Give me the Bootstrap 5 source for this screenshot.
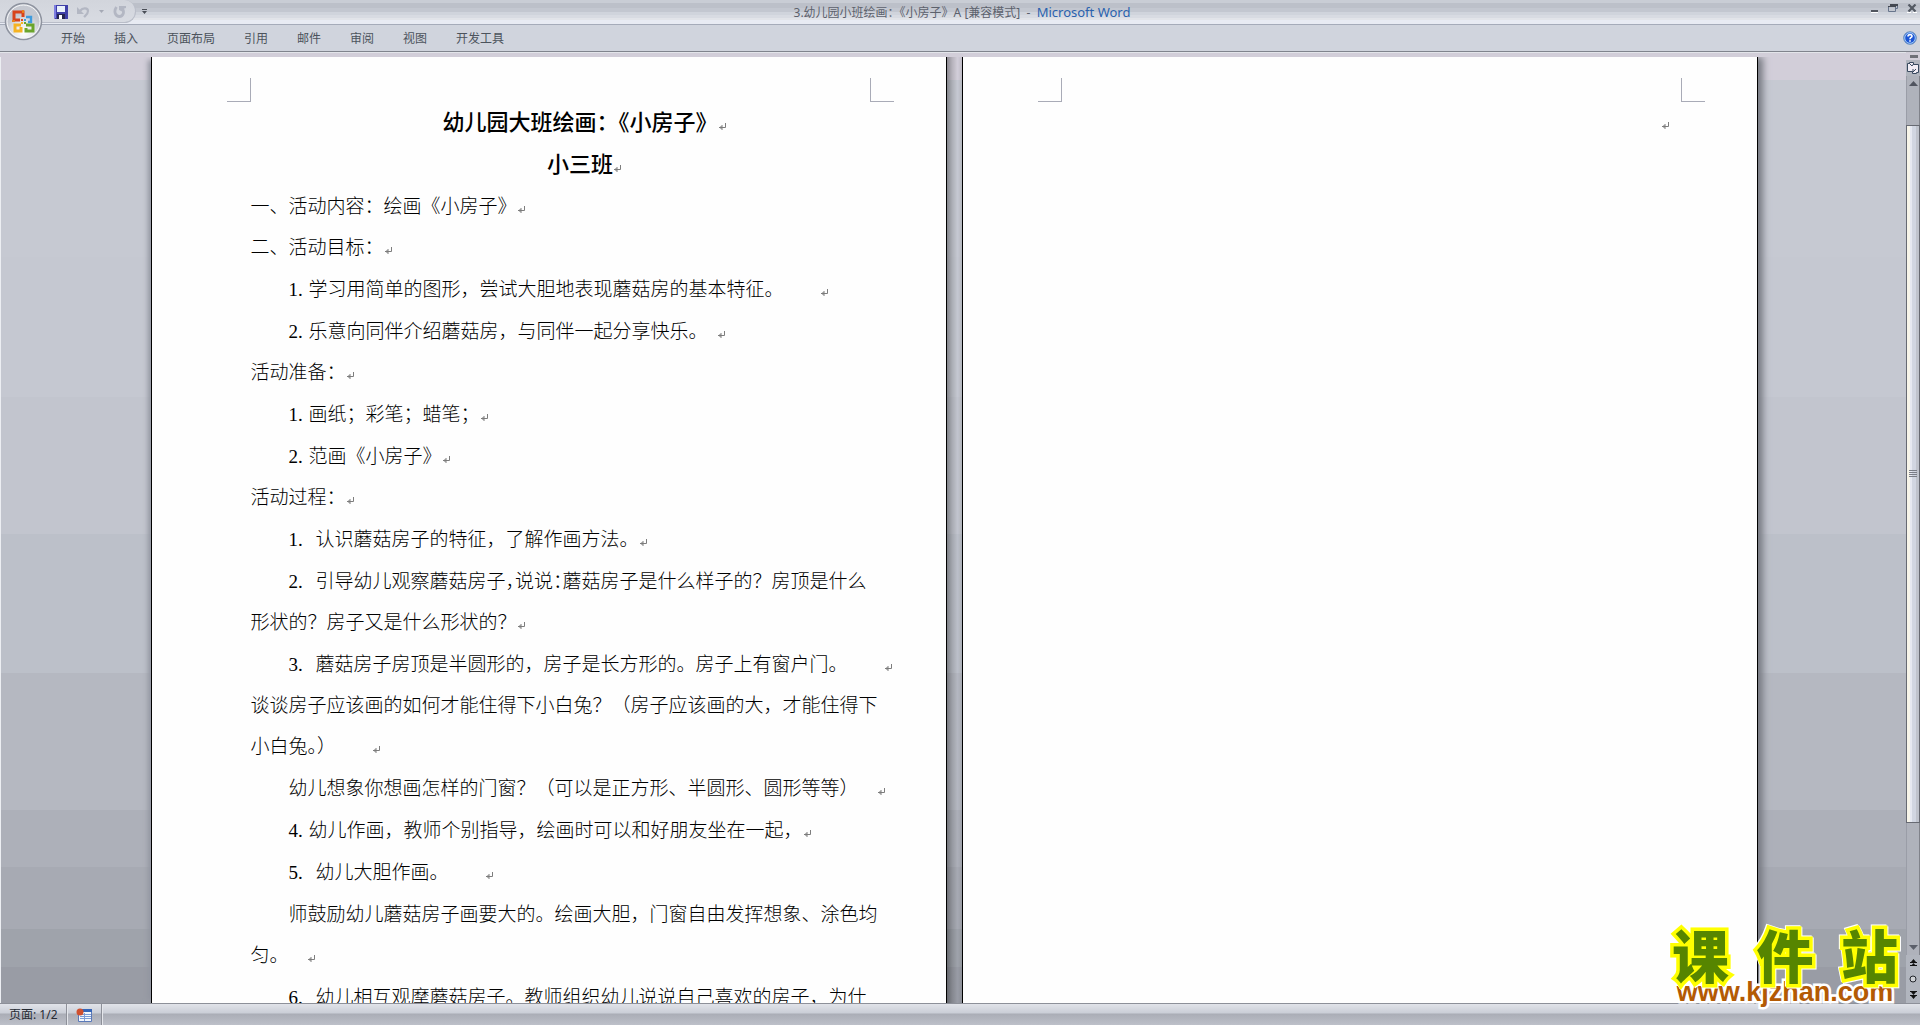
<!DOCTYPE html>
<html lang="zh-CN">
<head>
<meta charset="utf-8">
<meta name="viewport" content="width=device-width, initial-scale=1">
<title>3.幼儿园小班绘画：《小房子》A [兼容模式] - Microsoft Word</title>
<link href="https://cdn.jsdelivr.net/npm/bootstrap@5.3.0/dist/css/bootstrap.min.css" rel="stylesheet">
<style>
body{font-family:"Noto Sans","Noto Sans CJK SC",sans-serif;font-size:12px;line-height:16px;color:#4c535c;background:#d0d4dd}
button,a{color:inherit;text-decoration:none}
.plain{border:0;background:none;padding:0;display:flex;align-items:center;justify-content:center}
.title-bar{height:25px;border-bottom:1px solid #a5abb9;background:linear-gradient(#c9cdd5 0 3px,#bcc0c9 3px 8px,#c3c7d0 8px 12px,#d0d4dc 12px 15px,#d8dbe2 15px 18px,#e2e4e9 18px 20px,#e8ebf3 20px)}
.quick{width:136px;height:23px;padding:2px 15px 0 54px;gap:9px;border:1px solid #b9bdc8;border-width:0 1px 1px 0;border-radius:0 12px 12px 0;background:linear-gradient(#d2d5dc,#d8dbe2)}
.quick-menu{left:142px}
.app-name{color:#2a62ae;font-size:13px}
.caption-text{color:#5c616c}
.window-buttons{padding:4px 2px 0 0;gap:9px}
.ribbon{height:27px;border-bottom:1px solid #80848d;padding:0 3px 0 61px;gap:29px}
.ribbon-tab{line-height:28px;padding:0}
.orb{left:4px;top:2px;z-index:5}
.edge{height:5px;background:#d2ced9;border-top:1px solid #e3e5ea}
.workspace{background:linear-gradient(#d2ced9 0 23px,#c6c9d2 23px 200px,#c5c8d1 200px 340px,#c2c5ce 340px 477px,#bcc0c9 477px 616px,#b5b8c1 616px 753px,#adb0b9 753px 810px,#a7aab3 810px 872px,#9fa3ab 872px 910px,#999ca5 910px);border-left:1px solid #eceef2}
.pages{padding-left:1px}
.sheet{width:796px;background:#fefefe;border:1px solid #000;border-width:0 1px;flex:none;padding:21px 52px 0 75px}
.sheet-first{box-shadow:-6px 0 5px -3px #9295a0}
.sheet-last{box-shadow:5px 0 7px #777a82}
.spine{width:15px;flex:none;background:linear-gradient(90deg,#0005,#0002 35%,#0000 70%,#0001)}
.crop{width:24px;height:24px;border:0 solid #a9abb7;border-bottom-width:1px}
.crop-l{border-right-width:1px}
.crop-r{border-left-width:1px}
.doc{font-size:19px;line-height:41px;color:#000;font-family:"Liberation Serif","Noto Sans CJK SC",serif;padding-left:24px;white-space:nowrap;font-weight:300}
.doc-end{padding-right:36px}
.doc p{margin:0}
.doc .step{margin-top:1px;padding-left:38px}
.doc .cont{display:block;margin-left:-38px}
.doc h1,.doc h2{font-size:22px;line-height:42px;font-weight:500;margin:0;padding-left:24px;text-align:center;color:#000}
.half{font-feature-settings:"halt"}
.num{display:inline-block;width:20px}
.num-wide{display:inline-block;width:27px}
.ret{width:8px;height:9px;stroke:#7d7d7d;fill:none;vertical-align:-1px}
.gap-s{display:inline-block;width:9px}
.gap-m{display:inline-block;width:18px}
.gap-l{display:inline-block;width:36px}
.vbar{width:14px;background:#b1b5be}
.track{border-left:1px solid #9a9da7;border-right:1px solid #80828a;background:#afb2bb}
.track-top{height:49px;align-items:flex-start}
.thumb{height:698px;border:1px solid #676a73;background:linear-gradient(90deg,#f8f5e9 0 3px,#e6e9f2 3px 5px,#d1d6e2 5px 9px,#bfc3cd 9px);margin:0 -1px}
.browse{height:48px}
.status{height:22px;border-top:1px solid #8d9099;background:linear-gradient(#e1e3e9,#caced7 9px,#aaadb6 10px,#bdc0c9);color:#252a33;padding-left:1px}
.status-cell{border-right:1px solid #8d9099;box-shadow:1px 0 #e4e6eb}
.macro{width:34px}
.stamp{right:18px;bottom:20px;width:234px;z-index:6}
.stamp-name{font:900 57px/52px "Noto Sans CJK SC",sans-serif;color:#568500;-webkit-text-stroke:7px #ff0;paint-order:stroke fill;filter:drop-shadow(1px 1px #fff) drop-shadow(-1px -1px #fff)}
.stamp-url{font:bold 27px/26px "Liberation Sans",sans-serif;color:#b35a04;-webkit-text-stroke:5px #fff;paint-order:stroke fill}
</style>
</head>
<body class="vh-100 overflow-hidden d-flex flex-column position-relative">
<svg class="d-none" aria-hidden="true"><symbol id="ret" viewBox="0 0 8 9"><path d="M7.500 1v4.500H2M4 3v5M3 4v3M2 5v1M1 5.500h2"/></symbol></svg>

<header class="title-bar d-flex flex-none justify-content-between position-relative">
  <div class="quick d-flex align-items-center">
    <button class="plain" aria-label="保存"><svg width="14" height="14" viewBox="0 0 14 14"><path fill="#3f3fa8" d="M0 0h14v14H1l-1-1z"/><path fill="#7d7de0" d="M0 0h2v13H0z"/><path fill="#e9f1fb" d="M3 1h8v6H3z"/><path fill="#252550" d="M3 9h8v5H3z"/><path fill="#fff" d="M5 10h3v4H5z"/></svg></button>
    <button class="plain" aria-label="撤消"><svg width="13" height="12" viewBox="0 0 13 12"><path fill="none" stroke="#b3b7c3" stroke-width="2.200" d="M3 5c3-4 8-3 8 0 0 3-2 4-4 6"/><path fill="#b3b7c3" d="M0 1v7h7z"/></svg></button>
    <button class="plain" aria-label="撤消选项"><svg width="5" height="4"><path fill="#a5a9b5" d="M0 0h5L2.500 3z"/></svg></button>
    <button class="plain" aria-label="重复"><svg width="13" height="12" viewBox="0 0 13 12"><path fill="none" stroke="#b3b7c3" stroke-width="2.800" d="M3.500 1C0 6 3 10.500 6.500 10.500S12 6 9 2"/><path fill="#b3b7c3" d="M6 0h7v2l-3 1v3L6 4z"/></svg></button>
  </div>
  <button class="plain quick-menu position-absolute h-100" aria-label="自定义快速访问工具栏"><svg width="5" height="6"><path fill="#4a4e57" d="M0 0h5v1H0zM0 2h5L2.500 5z"/></svg></button>
  <div class="position-absolute top-0 start-50 translate-middle-x text-nowrap pt-1 ps-1"><span class="caption-text">3.幼儿园小班绘画：《小房子》A [兼容模式] &nbsp;-&nbsp; </span><span class="app-name">Microsoft Word</span></div>
  <div class="window-buttons d-flex align-items-start">
    <button class="plain" aria-label="最小化"><svg width="9" height="10"><path fill="#51555e" d="M1 6h7v2H1z"/><path fill="#fff" d="M1 8h7v1H1z"/></svg></button>
    <button class="plain" aria-label="还原"><svg width="10" height="8"><path fill="none" stroke="#68758c" d="M3.500 1v-.5h6v4h-2M.5 2.500h7v5h-7z"/><path fill="#444851" d="M2 0h8v2H2zM0 2h8v1H0z"/></svg></button>
    <button class="plain" aria-label="关闭"><svg width="11" height="9"><path stroke="#535963" stroke-width="2.200" d="M1.500.5l7 7M8.500.5l-7 7"/><path fill="#fff" d="M0 8h4v1H0zM6 8h4v1H6z"/></svg></button>
  </div>
</header>
<button class="plain orb position-absolute" aria-label="Office 按钮">
  <svg width="39" height="39" viewBox="0 0 39 39"><defs><radialGradient id="og" cy=".8"><stop offset="0" stop-color="#fff"/><stop offset=".6" stop-color="#e2e4e8"/><stop offset="1" stop-color="#c5c8d0"/></radialGradient></defs><circle cx="19.500" cy="19.500" r="18" fill="url(#og)" stroke="#8e939f" stroke-width="1.500"/><circle cx="19.500" cy="19.500" r="16.500" fill="none" stroke="#f7f8fa"/>
  <g fill="none" stroke-width="3"><path stroke="#d8431b" d="M16 18H10V10h9v5"/><path stroke="#3f9bdd" stroke-width="2.400" d="M22 15h5v5h-3"/><path stroke="#f5b322" d="M17 23h-6v6h6v-4"/><path stroke="#6ba52c" d="M22 23h7v6h-7v-3"/></g><path fill="#e8801c" d="M8 18h3v2H8zM18 8h2v3h-2z"/><path fill="#e04a20" d="M17 17h2v2h-2z"/><path fill="#3f9bdd" d="M20 17h2v2h-2z"/><path fill="#f5b322" d="M17 20h2v2h-2z"/><path fill="#6ba52c" d="M20 20h2v2h-2z"/></svg>
</button>
<nav class="ribbon d-flex" aria-label="功能区">
  <a class="ribbon-tab" href="#">开始</a><a class="ribbon-tab" href="#">插入</a><a class="ribbon-tab" href="#">页面布局</a><a class="ribbon-tab" href="#">引用</a><a class="ribbon-tab" href="#">邮件</a><a class="ribbon-tab" href="#">审阅</a><a class="ribbon-tab" href="#">视图</a><a class="ribbon-tab" href="#">开发工具</a>
  <button class="plain ms-auto" aria-label="帮助"><svg width="14" height="14" viewBox="0 0 14 14"><circle cx="7" cy="7" r="6.300" fill="#1d55d4" stroke="#6e92bd"/><circle cx="7" cy="7" r="5.300" fill="none" stroke="#a9d2f8"/><path fill="none" stroke="#fff" stroke-width="1.600" d="M5 5.500C5 3 9 3 9 5.200 9 6.500 7 6.500 7 8.200M7 9.200v1.600"/></svg></button>
</nav>
<div class="d-flex flex-grow-1 overflow-hidden">
  <div class="flex-grow-1 d-flex flex-column overflow-hidden">
    <div class="edge"></div>
    <main class="workspace flex-grow-1 overflow-hidden">
      <div class="pages d-flex justify-content-center h-100">
        <article class="sheet sheet-first h-100">
          <div class="d-flex justify-content-between"><span class="crop crop-l"></span><span class="crop crop-r"></span></div>
          <div class="doc">
            <h1>幼儿园大班绘画：《小房子》<svg class="ret"><use href="#ret"/></svg></h1>
            <h2>小三班<svg class="ret"><use href="#ret"/></svg></h2>
            <p>一、活动内容：绘画《小房子》<svg class="ret"><use href="#ret"/></svg></p>
            <p>二、活动目标：<svg class="ret"><use href="#ret"/></svg></p>
            <p class="step"><span class="num">1.</span>学习用简单的图形，尝试大胆地表现蘑菇房的基本特征。<span class="gap-l"></span><svg class="ret"><use href="#ret"/></svg></p>
            <p class="step"><span class="num">2.</span>乐意向同伴介绍蘑菇房，与同伴一起分享快乐。<span class="gap-s"></span><svg class="ret"><use href="#ret"/></svg></p>
            <p>活动准备：<svg class="ret"><use href="#ret"/></svg></p>
            <p class="step"><span class="num">1.</span>画纸；彩笔；蜡笔；<svg class="ret"><use href="#ret"/></svg></p>
            <p class="step"><span class="num">2.</span>范画《小房子》<svg class="ret"><use href="#ret"/></svg></p>
            <p>活动过程：<svg class="ret"><use href="#ret"/></svg></p>
            <p class="step"><span class="num-wide">1.</span>认识蘑菇房子的特征，了解作画方法。<svg class="ret"><use href="#ret"/></svg></p>
            <p class="step"><span class="num-wide">2.</span>引导幼儿观察蘑菇房子<span class="half">，</span>说说<span class="half">：</span>蘑菇房子是什么样子的？房顶是什么<span class="cont">形状的？房子又是什么形状的？<svg class="ret"><use href="#ret"/></svg></span></p>
            <p class="step"><span class="num-wide">3.</span>蘑菇房子房顶是半圆形的，房子是长方形的。房子上有窗户门。<span class="gap-l"></span><svg class="ret"><use href="#ret"/></svg><span class="cont">谈谈房子应该画的如何才能住得下小白兔？（房子应该画的大，才能住得下</span><span class="cont">小白兔<span class="half">。</span>）<span class="gap-l"></span><svg class="ret"><use href="#ret"/></svg></span></p>
            <p class="step">幼儿想象你想画怎样的门窗？（可以是正方形、半圆形、圆形等等）<span class="gap-m"></span><svg class="ret"><use href="#ret"/></svg></p>
            <p class="step"><span class="num">4.</span>幼儿作画，教师个别指导，绘画时可以和好朋友坐在一起，<svg class="ret"><use href="#ret"/></svg></p>
            <p class="step"><span class="num-wide">5.</span>幼儿大胆作画。<span class="gap-l"></span><svg class="ret"><use href="#ret"/></svg></p>
            <p class="step">师鼓励幼儿蘑菇房子画要大的。绘画大胆，门窗自由发挥想象、涂色均<span class="cont">匀。<span class="gap-m"></span><svg class="ret"><use href="#ret"/></svg></span></p>
            <p class="step"><span class="num-wide">6.</span>幼儿相互观摩蘑菇房子。教师组织幼儿说说自己喜欢的房子，为什</p>
          </div>
        </article>
        <div class="spine"></div>
        <article class="sheet sheet-last h-100">
          <div class="d-flex justify-content-between"><span class="crop crop-l"></span><span class="crop crop-r"></span></div>
          <div class="doc doc-end text-end"><p><svg class="ret"><use href="#ret"/></svg></p></div>
        </article>
      </div>
    </main>
  </div>
  <aside class="vbar d-flex flex-column" aria-label="垂直滚动条">
    <button class="plain" aria-label="拆分"><svg width="14" height="8"><path fill="#d2ced9" d="M0 0h14v8H0z"/><path fill="#6f7078" d="M4 3h8v3H4z"/></svg></button>
    <button class="plain" aria-label="标尺"><svg width="14" height="16" viewBox="0 0 14 16"><path fill="#f1edf5" stroke="#3a4a60" d="M1.500 3.500h2v-1h4v2h5v8h-2v1h-4v-2h-5z"/><path fill="none" stroke="#3a4a60" d="M3 3l3 3 1.500-2M7 9v3l3-3"/></svg></button>
    <div class="track flex-grow-1 d-flex flex-column">
      <button class="plain track-top pt-1" aria-label="向上滚动"><svg width="9" height="6"><path fill="#50545f" d="M0 6 4.500 1 9 6z"/></svg></button>
      <div class="thumb d-flex align-items-center justify-content-center"><svg width="8" height="8"><path fill="#7a7d87" d="M0 0h8v1H0zM0 2h8v1H0zM0 4h8v1H0zM0 6h8v1H0z"/></svg></div>
      <button class="plain mt-auto pb-1" aria-label="向下滚动"><svg width="9" height="6"><path fill="#5b5f6a" d="M0 0h9L4.500 5z"/></svg></button>
    </div>
    <div class="browse d-flex flex-column justify-content-around">
      <button class="plain" aria-label="前一页"><svg width="7" height="8"><path fill="#111" d="M3.500 0 6 3H1zM0 3h7v1H0zM3.500 4 6 7H1zM0 6h7v1H0z"/></svg></button>
      <button class="plain" aria-label="选择浏览对象"><svg width="8" height="8"><circle cx="4" cy="4" r="3" fill="#cfd2d6" stroke="#22252b"/></svg></button>
      <button class="plain" aria-label="下一页"><svg width="7" height="8"><path fill="#111" d="M0 0h7v1H0zM1 1h5L3.500 4zM0 4h7v1H0zM1 5h5L3.500 8z"/></svg></button>
    </div>
  </aside>
</div>
<footer class="status d-flex">
  <div class="status-cell px-2 d-flex align-items-center">页面: 1/2</div>
  <button class="plain macro" aria-label="宏录制"><svg width="16" height="14"><path fill="#f4f7fd" stroke="#5a79b8" d="M2.500 2.500h13v11h-13z"/><path fill="#3565b8" d="M3 1h13v3H3z"/><path stroke="#7c9cd6" stroke-width="1" d="M4 6.500h11M4 8.500h11M4 10.500h11M8.500 5v8"/><circle cx="4" cy="4" r="3.500" fill="#d0502f"/></svg></button>
  <div class="status-cell"></div>
</footer>
<div class="stamp position-absolute">
  <div class="stamp-name d-flex justify-content-between px-1"><span>课</span><span>件</span><span>站</span></div>
  <a class="stamp-url d-block text-center" href="#">www.kjzhan.com</a>
</div>
<script src="https://cdn.jsdelivr.net/npm/bootstrap@5.3.0/dist/js/bootstrap.bundle.min.js"></script>
</body>
</html>
